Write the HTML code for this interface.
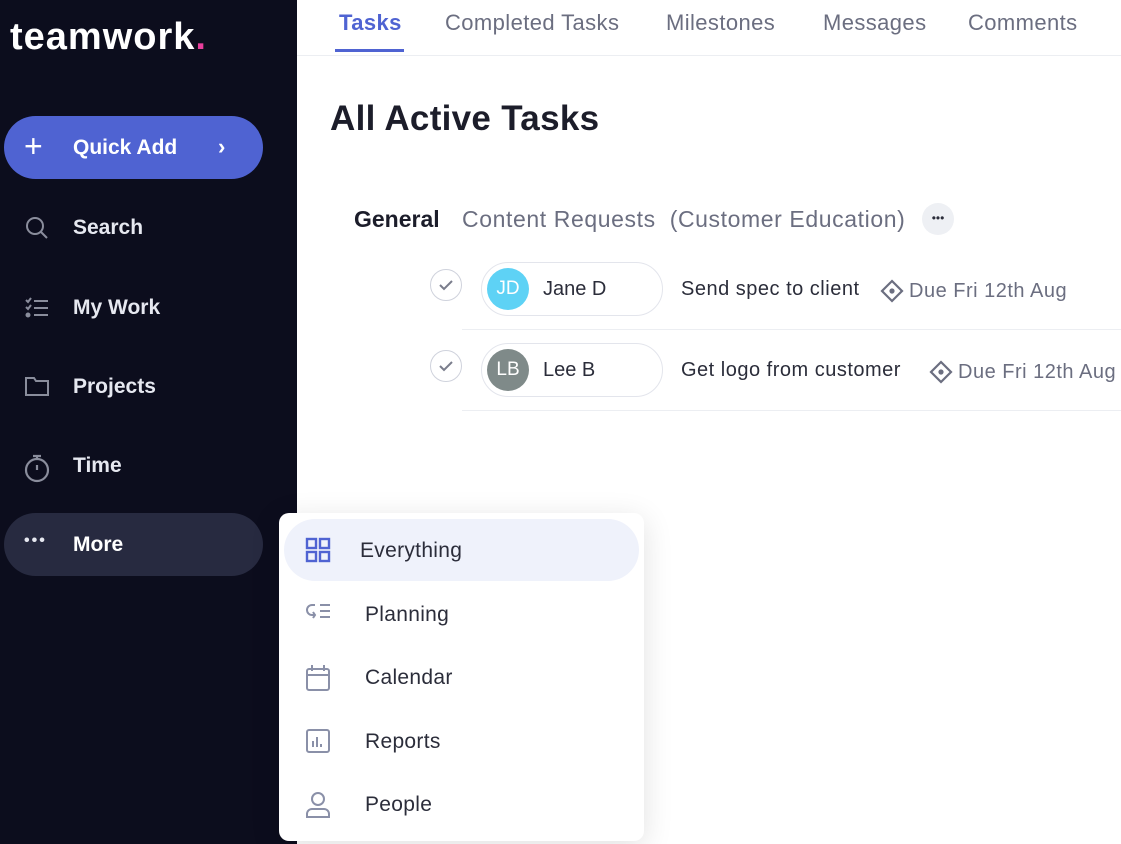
<!DOCTYPE html>
<html><head><meta charset="utf-8"><style>
*{margin:0;padding:0;box-sizing:border-box}
body{width:1121px;height:844px;overflow:hidden;background:#fff;font-family:"Liberation Sans",sans-serif;position:relative}
.side{position:absolute;left:0;top:0;width:297px;height:844px;background:#0c0d1d}
.logo{position:absolute;left:10px;top:16px;color:#fff;font-size:38px;font-weight:bold;letter-spacing:1px}
.logo span{color:#e83e9c}
.qa{position:absolute;left:4px;top:116px;width:259px;height:63px;border-radius:32px;background:#4f63d2;color:#fff;font-size:21px;font-weight:bold}
.it{position:absolute;left:0;width:297px;height:40px;color:#e6e8f0;font-size:21px;font-weight:bold}
.it .t{position:absolute;left:73px;top:6px}
.it svg{position:absolute;left:24px;top:5px}
.more{position:absolute;left:4px;top:513px;width:259px;height:63px;border-radius:32px;background:#272a40}
.abs{position:absolute;white-space:nowrap}
.tab{position:absolute;top:10px;font-size:22px;color:#6b6e80;letter-spacing:0.4px}
.dd{position:absolute;left:279px;top:513px;width:365px;height:328px;background:#fff;border-radius:10px;box-shadow:0 6px 30px rgba(0,0,0,.12)}
.dd .r{position:absolute;left:0;width:365px;height:62px;font-size:21px;color:#2b2d3a;letter-spacing:0.3px}
.dd .r span{position:absolute;left:86px;top:20px}
.dd svg{position:absolute;left:26px;top:18px}
.chk{position:absolute;width:32px;height:32px;border-radius:50%;border:1.5px solid #cfd2dc}
.pill{position:absolute;width:182px;height:54px;border-radius:27px;border:1.5px solid #e3e5ec}
.av{position:absolute;left:5px;top:5px;width:42px;height:42px;border-radius:50%;color:#fff;font-size:19px;text-align:center;line-height:42px}
.pill .n{position:absolute;left:61px;top:15px;font-size:20px;color:#2b2d3a}
.task{font-size:20px;color:#2b2d3a;letter-spacing:0.5px}
.due{font-size:20px;color:#6b6e80;letter-spacing:0.5px}
</style></head><body>
<div class="side">
<div class="logo">teamwork<span>.</span></div>
<div class="qa"><span class="abs" style="left:20px;top:12px;font-size:32px;font-weight:normal">+</span><span class="abs" style="left:69px;top:20px">Quick Add</span><span class="abs" style="left:214px;top:18px;font-size:22px">›</span></div>
<div class="it" style="top:210px"><svg width="26" height="26" viewBox="0 0 26 26" fill="none" stroke="#8a8d9c" stroke-width="2"><circle cx="11" cy="11" r="8"/><path d="M17 17l6 6"/></svg><span class="t">Search</span></div>
<div class="it" style="top:290px"><svg width="26" height="26" viewBox="0 0 26 26" fill="none" stroke="#8a8d9c" stroke-width="2"><path d="M2 5l2 2 3-4M2 12l2 2 3-4M10 6h14M10 13h14M10 20h14"/><circle cx="4" cy="20" r="1.5" fill="#8a8d9c"/></svg><span class="t">My Work</span></div>
<div class="it" style="top:369px"><svg width="26" height="26" viewBox="0 0 26 26" fill="none" stroke="#8a8d9c" stroke-width="2"><path d="M2 4h8l2 3h12v14H2z"/></svg><span class="t">Projects</span></div>
<div class="it" style="top:448px"><svg width="28" height="30" viewBox="0 0 28 30" fill="none" stroke="#8a8d9c" stroke-width="2.2"><circle cx="13" cy="17" r="11"/><path d="M9 3h8M13 3v3M13 12v5"/></svg><span class="t">Time</span></div>
<div class="more"></div>
<div class="it" style="top:527px"><span class="abs" style="left:24px;top:5px;font-size:16px;letter-spacing:2px">•••</span><span class="t" style="color:#fff">More</span></div>
</div>
<span class="tab" style="left:339px;color:#4f63d2;font-weight:bold">Tasks</span>
<div class="abs" style="left:335px;top:49px;width:69px;height:3px;background:#4f63d2"></div>
<span class="tab" style="left:445px">Completed Tasks</span>
<span class="tab" style="left:666px">Milestones</span>
<span class="tab" style="left:823px">Messages</span>
<span class="tab" style="left:968px">Comments</span>
<div class="abs" style="left:297px;top:55px;width:824px;height:1px;background:#eceef2"></div>
<span class="abs" style="left:330px;top:99px;font-size:35px;color:#1c1d2a;font-weight:bold;letter-spacing:0.3px">All Active Tasks</span>
<span class="abs" style="left:354px;top:206px;font-size:23px;color:#1c1d2a;font-weight:bold">General</span>
<span class="abs" style="left:462px;top:206px;font-size:23px;color:#6b6e80;letter-spacing:0.6px">Content Requests &nbsp;(Customer Education)</span>
<div class="abs" style="left:922px;top:203px;width:32px;height:32px;border-radius:50%;background:#eef0f4;text-align:center;font-size:12px;line-height:30px;color:#2b2d3a">•••</div>
<div class="chk" style="left:430px;top:269px"><svg width="30" height="30" viewBox="0 0 30 30" fill="none" stroke="#7a7d8c" stroke-width="2"><path d="M9 15l4 4 8-8"/></svg></div>
<div class="pill" style="left:481px;top:262px"><div class="av" style="background:#5ed2f5">JD</div><span class="n">Jane D</span></div>
<span class="abs task" style="left:681px;top:278px">Send spec to client</span>
<svg class="abs" style="left:880px;top:279px" width="24" height="24" viewBox="0 0 24 24" fill="none" stroke="#6b6e80" stroke-width="2.2"><path d="M12 2l10 10-10 10L2 12z"/><circle cx="12" cy="12" r="1.5" fill="#6b6e80"/></svg>
<span class="abs due" style="left:909px;top:280px">Due Fri 12th Aug</span>
<div class="abs" style="left:462px;top:329px;width:659px;height:1px;background:#eceef2"></div>
<div class="chk" style="left:430px;top:350px"><svg width="30" height="30" viewBox="0 0 30 30" fill="none" stroke="#7a7d8c" stroke-width="2"><path d="M9 15l4 4 8-8"/></svg></div>
<div class="pill" style="left:481px;top:343px"><div class="av" style="background:#7f8a89">LB</div><span class="n">Lee B</span></div>
<span class="abs task" style="left:681px;top:359px">Get logo from customer</span>
<svg class="abs" style="left:929px;top:360px" width="24" height="24" viewBox="0 0 24 24" fill="none" stroke="#6b6e80" stroke-width="2.2"><path d="M12 2l10 10-10 10L2 12z"/><circle cx="12" cy="12" r="1.5" fill="#6b6e80"/></svg>
<span class="abs due" style="left:958px;top:361px">Due Fri 12th Aug</span>
<div class="abs" style="left:462px;top:410px;width:659px;height:1px;background:#eceef2"></div>
<div class="dd">
<div class="abs" style="left:5px;top:6px;width:355px;height:62px;border-radius:31px;background:#eff2fb"></div>
<div class="r" style="top:6px"><svg width="26" height="26" viewBox="0 0 26 26" fill="none" stroke="#4f63d2" stroke-width="2.4"><rect x="2" y="2" width="9" height="9"/><rect x="15" y="2" width="9" height="9"/><rect x="2" y="15" width="9" height="9"/><rect x="15" y="15" width="9" height="9"/></svg><span style="left:81px">Everything</span></div>
<div class="r" style="top:70px"><svg width="30" height="26" viewBox="0 0 30 26" fill="none" stroke="#8a90a8" stroke-width="2"><path d="M10 4H7a5 5 0 000 10h3M8 11l2 3-2 3M15 4h10M15 10h10M15 16h10"/></svg><span>Planning</span></div>
<div class="r" style="top:133px"><svg width="26" height="28" viewBox="0 0 26 28" fill="none" stroke="#8a90a8" stroke-width="2"><rect x="2" y="5" width="22" height="21" rx="2"/><path d="M2 11h22M7 1v6M19 1v6"/></svg><span>Calendar</span></div>
<div class="r" style="top:197px"><svg width="26" height="26" viewBox="0 0 26 26" fill="none" stroke="#8a90a8" stroke-width="2"><rect x="2" y="2" width="22" height="22" rx="2"/><path d="M8 19v-6M12 19V9M16 19v-3"/></svg><span>Reports</span></div>
<div class="r" style="top:260px"><svg width="26" height="28" viewBox="0 0 26 28" fill="none" stroke="#8a90a8" stroke-width="2"><circle cx="13" cy="8" r="6"/><path d="M2 26v-3a5 5 0 015-5h12a5 5 0 015 5v3z"/></svg><span>People</span></div>
</div>
</body></html>
